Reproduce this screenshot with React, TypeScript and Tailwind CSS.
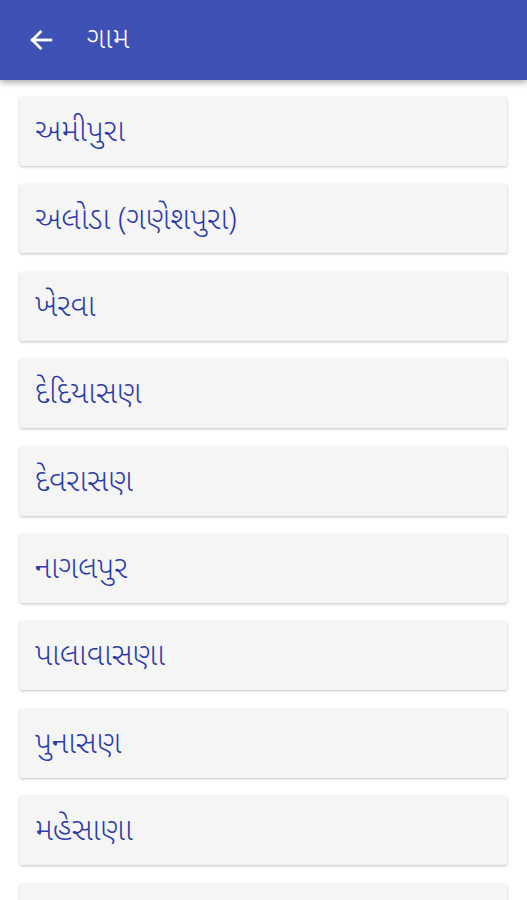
import React from "react";

const items = [
  "અમીપુરા",
  "અલોડા (ગણેશપુરા)",
  "ખેરવા",
  "દેદિયાસણ",
  "દેવરાસણ",
  "નાગલપુર",
  "પાલાવાસણા",
  "પુનાસણ",
  "મહેસાણા",
  "લાખવડ",
];

const font = { fontFamily: '"Noto Sans Gujarati", "Noto Sans", Roboto, sans-serif' };

export default function App() {
  return (
    <div className="w-[527px] h-[900px] overflow-hidden bg-white" style={font}>
      <div className="relative z-10 h-[80px] bg-[#3F51B5] flex items-center shadow-[0_3px_6px_rgba(0,0,0,0.3)]">
        <svg className="ml-[28px]" width="26" height="26" viewBox="0 0 24 24" fill="none" stroke="white" strokeWidth="2.6" strokeLinecap="square">
          <path d="M21 12H4" />
          <path d="M11.5 4.5L4 12l7.5 7.5" />
        </svg>
        <span className="ml-[33px] mt-[3px] text-white text-[29px] font-[350] leading-none">ગામ</span>
      </div>
      <div className="flex flex-col gap-[18.4px] pt-[17px] px-[20px]">
        {items.map((t) => (
          <div
            key={t}
            className="h-[69px] shrink-0 bg-[#F5F5F5] rounded-[2px] shadow-[0_1px_3px_rgba(0,0,0,0.25)] flex items-center pl-[15px] pt-[6px]"
          >
            <span className="text-[#2C3BA8] text-[30.7px] font-[350] leading-none">{t}</span>
          </div>
        ))}
      </div>
    </div>
  );
}
